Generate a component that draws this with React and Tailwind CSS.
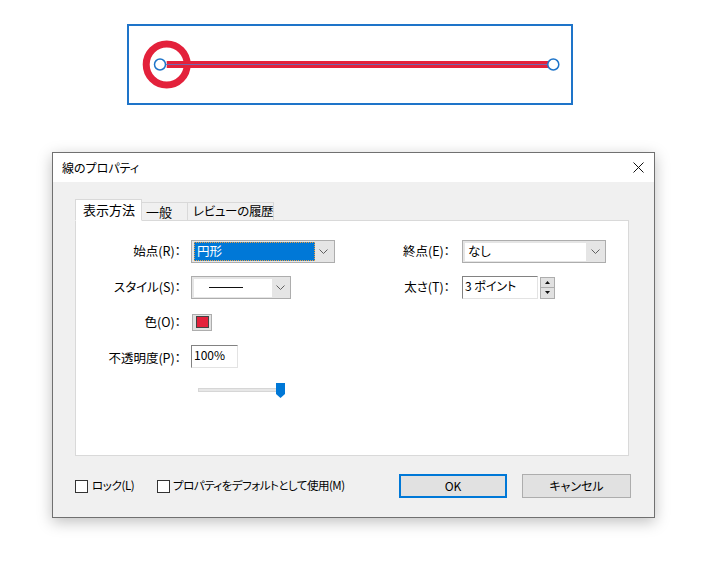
import React from 'react';

const font = "font-['Noto_Sans_CJK_JP',sans-serif] [font-feature-settings:'palt']";

function Chevron() {
  return (
    <svg width="9" height="5" viewBox="0 0 9 5" className="shrink-0">
      <path d="M0.5 0.5 L4.5 4.5 L8.5 0.5" fill="none" stroke="#606060" strokeWidth="1" />
    </svg>
  );
}

function Label({ w, children }) {
  return <div className={`text-right text-[12.5px] leading-none text-black whitespace-nowrap ${w}`}>{children}</div>;
}

function SunkenInput({ w, children }) {
  return (
    <div className={`h-[23px] ${w} bg-white border border-t-[#828282] border-l-[#828282] border-r-[#e3e3e3] border-b-[#e3e3e3] pl-[2px] pt-[3px] text-[12px] leading-none text-black whitespace-nowrap`}>
      {children}
    </div>
  );
}

export default function App() {
  return (
    <div className={`w-[723px] h-[564px] bg-white overflow-hidden ${font}`}>
      {/* preview of the line */}
      <div className="ml-[127px] mt-[24px] w-[446px] h-[81px] border-2 border-[#1e74c9] bg-white">
        <svg width="442" height="77" viewBox="0 0 442 77">
          <circle cx="37.7" cy="38.5" r="20.5" fill="none" stroke="#e3213b" strokeWidth="7" />
          <rect x="37.7" y="35" width="387" height="7" fill="#e3213b" />
          <line x1="37" y1="38.5" x2="424" y2="38.5" stroke="#5a78c8" strokeWidth="0.8" />
          <circle cx="31" cy="38.5" r="5.5" fill="white" stroke="#1e74c9" strokeWidth="1.5" />
          <circle cx="424.3" cy="38.5" r="5.5" fill="white" stroke="#1e74c9" strokeWidth="1.5" />
        </svg>
      </div>

      {/* dialog */}
      <div className="ml-[52px] mt-[47px] w-[603px] h-[366px] border border-[#707070] bg-[#f0f0f0] shadow-[0_4px_14px_rgba(0,0,0,0.25)] flex flex-col">
        <div className="h-[29px] bg-white flex items-center justify-between pl-[9px] pr-[10px]">
          <span className="text-[12px] leading-none text-black">線のプロパティ</span>
          <svg width="11" height="11" viewBox="0 0 11 11">
            <path d="M0.5 0.5 L10.5 10.5 M10.5 0.5 L0.5 10.5" stroke="#111" strokeWidth="1" />
          </svg>
        </div>

        <div className="pl-[22px] pt-[17px]">
          {/* tabs */}
          <div className="flex items-end h-[21px] relative z-10">
            <div className="w-[67px] h-[22px] -mb-px bg-white border border-[#d9d9d9] border-b-white pl-[7px] pt-[3px] text-[13px] leading-none text-black whitespace-nowrap">表示方法</div>
            <div className="w-[46px] h-[18px] bg-[#f0f0f0] border border-l-0 border-[#d9d9d9] border-b-0 pl-[4px] pt-[2px] text-[13px] leading-none text-black whitespace-nowrap">一般</div>
            <div className="w-[86px] h-[18px] bg-[#f0f0f0] border border-l-0 border-[#d9d9d9] border-b-0 pl-[5px] pt-[2px] text-[12.5px] tracking-[-0.3px] leading-none text-black whitespace-nowrap">レビューの履歴</div>
          </div>

          {/* panel */}
          <div className="w-[554px] h-[236px] bg-white border border-[#d9d9d9] pt-[19px]">
            {/* row 1 */}
            <div className="flex items-center h-[23px]">
              <div className="w-[300px] flex items-center">
                <Label w="w-[105px]">始点(R)：</Label>
                <div className="ml-[10px] w-[144px] h-[23px] bg-[#e5e5e5] border border-[#adadad] flex items-center pl-[2px] pr-[6px]">
                  <div className="w-[121px] h-[19px] bg-[#0078d7] outline outline-1 outline-dotted outline-[#f0a040] -outline-offset-1 pl-[3px] pt-[3px] text-[12.5px] leading-none text-white">円形</div>
                  <div className="flex-1 flex justify-end"><Chevron /></div>
                </div>
              </div>
              <div className="flex items-center">
                <Label w="w-[74px]">終点(E)：</Label>
                <div className="ml-[12px] w-[144px] h-[23px] bg-[#e5e5e5] border border-[#adadad] flex items-center pl-[2px] pr-[5px]">
                  <div className="w-[121px] h-[18px] bg-white pl-[3px] pt-[2px] text-[12.5px] leading-none text-black">なし</div>
                  <div className="flex-1 flex justify-end"><Chevron /></div>
                </div>
              </div>
            </div>

            {/* row 2 */}
            <div className="flex items-center h-[23px] mt-[13px]">
              <div className="w-[300px] flex items-center">
                <Label w="w-[105px]">スタイル(S)：</Label>
                <div className="ml-[10px] w-[100px] h-[23px] bg-[#e5e5e5] border border-[#adadad] flex items-center pl-[2px] pr-[5px]">
                  <div className="w-[78px] h-[18px] bg-white flex items-center pl-[15px]">
                    <div className="w-[34px] h-px bg-[#111]" />
                  </div>
                  <div className="flex-1 flex justify-end"><Chevron /></div>
                </div>
              </div>
              <div className="flex items-center">
                <Label w="w-[74px]">太さ(T)：</Label>
                <div className="ml-[12px]">
                  <SunkenInput w="w-[76px]">3 ポイント</SunkenInput>
                </div>
                <div className="ml-[2px] w-[15px] h-[22px] flex flex-col">
                  <div className="h-[11px] bg-[#e1e1e1] border border-[#adadad] flex items-center justify-center">
                    <svg width="5" height="3" viewBox="0 0 5 3"><path d="M2.5 0 L5 3 L0 3 Z" fill="#111" /></svg>
                  </div>
                  <div className="h-[11px] bg-[#e1e1e1] border border-t-0 border-[#adadad] flex items-center justify-center">
                    <svg width="5" height="3" viewBox="0 0 5 3"><path d="M0 0 L5 0 L2.5 3 Z" fill="#111" /></svg>
                  </div>
                </div>
              </div>
            </div>

            {/* row 3 */}
            <div className="flex items-center h-[20px] mt-[13px]">
              <Label w="w-[105px]">色(O)：</Label>
              <div className="ml-[11px] w-[20px] h-[17px] bg-[#e1e1e1] border border-[#adadad] flex items-center justify-center">
                <div className="w-[13px] h-[12px] bg-[#e3213b] border border-[#444]" />
              </div>
            </div>

            {/* row 4 */}
            <div className="flex items-center h-[23px] mt-[13px]">
              <div className="pt-[4px]"><Label w="w-[105px]">不透明度(P)：</Label></div>
              <div className="ml-[10px]">
                <SunkenInput w="w-[47px]">100%</SunkenInput>
              </div>
            </div>

            {/* slider */}
            <div className="ml-[122px] mt-[14px] flex items-center h-[16px]">
              <div className="w-[79px] h-[4px] bg-[#e7e7e7] border border-[#d6d6d6]" />
              <svg width="9" height="15" viewBox="0 0 9 15" className="-ml-[1px]">
                <path d="M0 0 H9 V11 L4.5 15 L0 11 Z" fill="#0078d7" />
              </svg>
            </div>
          </div>

          {/* bottom row */}
          <div className="flex items-center h-[24px] mt-[18px]">
            <div className="w-[82px] flex items-center">
              <div className="w-[13px] h-[13px] bg-white border border-[#333]" />
              <span className="ml-[4px] text-[11.5px] tracking-[-0.4px] leading-none text-black whitespace-nowrap">ロック(L)</span>
            </div>
            <div className="w-[13px] h-[13px] bg-white border border-[#333]" />
            <span className="ml-[3px] text-[11.5px] tracking-[-0.5px] leading-none text-black whitespace-nowrap">プロパティをデフォルトとして使用(M)</span>
            <div className="flex-1" />
            <div className="w-[108px] h-[24px] bg-[#e1e1e1] border-2 border-[#0078d7] flex items-center justify-center text-[12px] leading-none text-black">OK</div>
            <div className="ml-[15px] mr-[23px] w-[109px] h-[24px] bg-[#e1e1e1] border border-[#adadad] flex items-center justify-center text-[12px] leading-none text-black">キャンセル</div>
          </div>
        </div>
      </div>
    </div>
  );
}
